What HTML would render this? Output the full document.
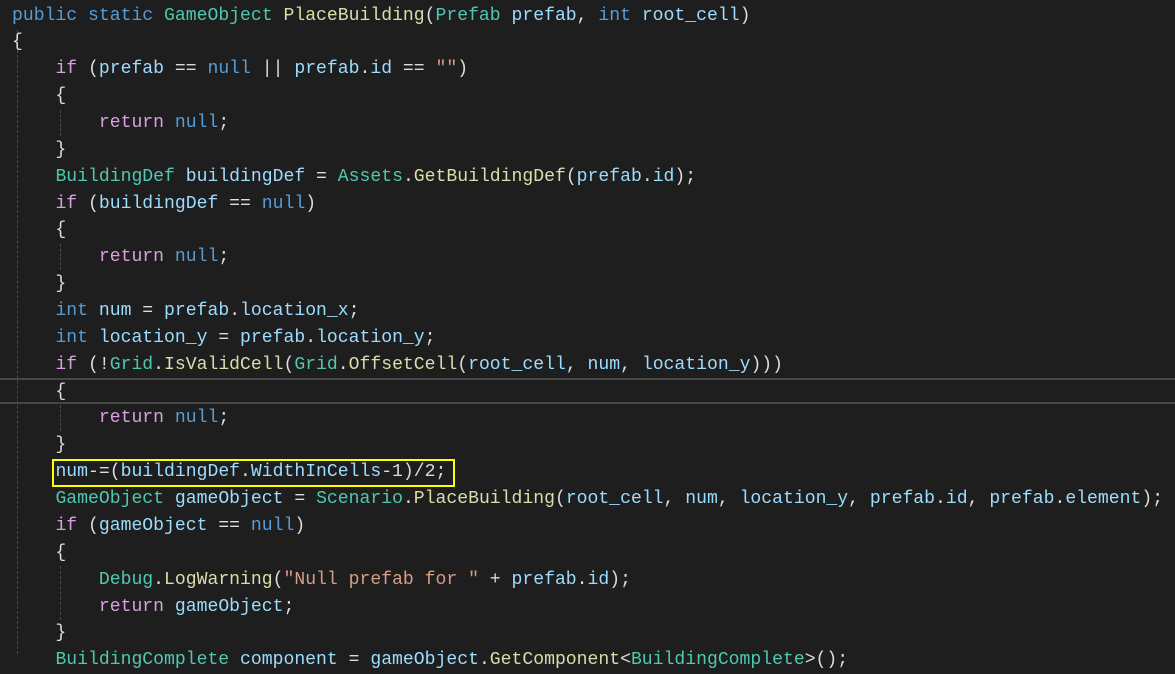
<!DOCTYPE html>
<html><head><meta charset="utf-8"><style>
html,body{margin:0;padding:0;background:#1e1e1e;width:1175px;height:654px;overflow:hidden;}
#c{position:absolute;left:12px;top:2.6px;font-family:"Liberation Mono","Noto Sans CJK SC",monospace;font-size:18.1px;line-height:26.86px;color:#dcdcdc;white-space:pre;}
.k{color:#569cd6}.t{color:#4ec9b0}.m{color:#dcdcaa}.v{color:#9cdcfe}.c{color:#d8a0df}.s{color:#d69d85}
.g{position:absolute;width:0;border-left:1px dashed #4a4a4a;}
.hl{position:absolute;left:0;width:1175px;height:2px;background:#464646;}
#box{position:absolute;left:52px;top:459px;width:399px;height:24px;border:2px solid #ffff00;}
</style></head><body>
<div class="hl" style="top:378px"></div>
<div class="hl" style="top:402px"></div>
<div class="g" style="left:17px;top:30px;height:624px"></div>
<div class="g" style="left:60px;top:110px;height:26px"></div>
<div class="g" style="left:60px;top:244px;height:26px"></div>
<div class="g" style="left:60px;top:405px;height:26px"></div>
<div class="g" style="left:60px;top:566px;height:54px"></div>
<div id="box"></div>
<div id="c"><span class="k">public</span> <span class="k">static</span> <span class="t">GameObject</span> <span class="m">PlaceBuilding</span>(<span class="t">Prefab</span> <span class="v">prefab</span>, <span class="k">int</span> <span class="v">root_cell</span>)
{
    <span class="c">if</span> (<span class="v">prefab</span> == <span class="k">null</span> || <span class="v">prefab</span>.<span class="v">id</span> == <span class="s">""</span>)
    {
        <span class="c">return</span> <span class="k">null</span>;
    }
    <span class="t">BuildingDef</span> <span class="v">buildingDef</span> = <span class="t">Assets</span>.<span class="m">GetBuildingDef</span>(<span class="v">prefab</span>.<span class="v">id</span>);
    <span class="c">if</span> (<span class="v">buildingDef</span> == <span class="k">null</span>)
    {
        <span class="c">return</span> <span class="k">null</span>;
    }
    <span class="k">int</span> <span class="v">num</span> = <span class="v">prefab</span>.<span class="v">location_x</span>;
    <span class="k">int</span> <span class="v">location_y</span> = <span class="v">prefab</span>.<span class="v">location_y</span>;
    <span class="c">if</span> (!<span class="t">Grid</span>.<span class="m">IsValidCell</span>(<span class="t">Grid</span>.<span class="m">OffsetCell</span>(<span class="v">root_cell</span>, <span class="v">num</span>, <span class="v">location_y</span>)))
    {
        <span class="c">return</span> <span class="k">null</span>;
    }
    <span class="v">num</span>-=(<span class="v">buildingDef</span>.<span class="v">WidthInCells</span>-1)/2;
    <span class="t">GameObject</span> <span class="v">gameObject</span> = <span class="t">Scenario</span>.<span class="m">PlaceBuilding</span>(<span class="v">root_cell</span>, <span class="v">num</span>, <span class="v">location_y</span>, <span class="v">prefab</span>.<span class="v">id</span>, <span class="v">prefab</span>.<span class="v">element</span>);
    <span class="c">if</span> (<span class="v">gameObject</span> == <span class="k">null</span>)
    {
        <span class="t">Debug</span>.<span class="m">LogWarning</span>(<span class="s">"Null prefab for "</span> + <span class="v">prefab</span>.<span class="v">id</span>);
        <span class="c">return</span> <span class="v">gameObject</span>;
    }
    <span class="t">BuildingComplete</span> <span class="v">component</span> = <span class="v">gameObject</span>.<span class="m">GetComponent</span>&lt;<span class="t">BuildingComplete</span>&gt;();
</div>
</body></html>
